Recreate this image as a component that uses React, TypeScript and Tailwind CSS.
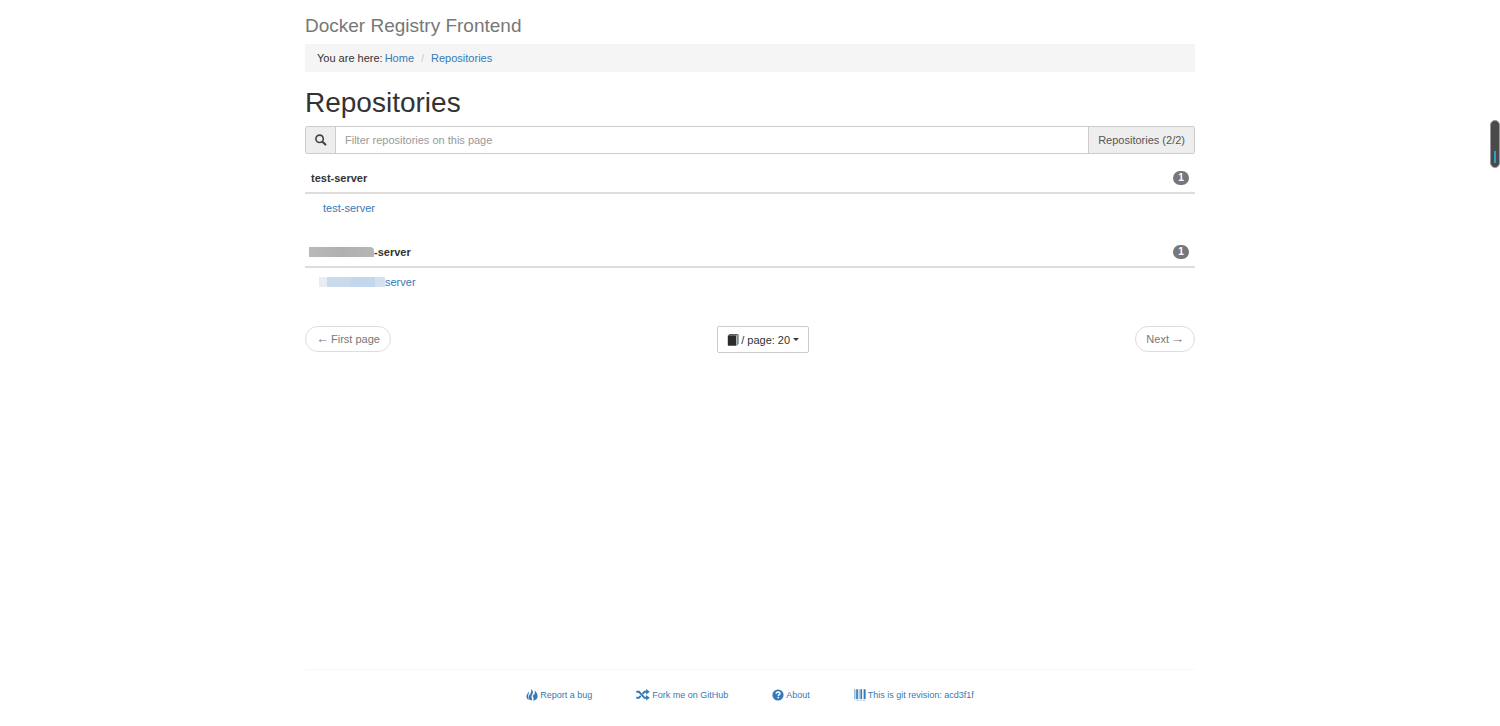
import { useState } from "react";
import type { ReactNode } from "react";

type Repository = {
  name: string;
  link: string;
  tags: number;
  masked?: boolean;
};

const REPOSITORIES: Repository[] = [
  { name: "test-server", link: "test-server", tags: 1 },
  { name: "-server", link: "server", tags: 1, masked: true }
];

const PAGE_SIZES = [10, 20, 50, 100];

function SearchIcon() {
  return (
    <svg viewBox="0 0 12 12" className="size-3" fill="none" stroke="#444" aria-hidden="true">
      <circle cx="4.6" cy="4.8" r="3.7" strokeWidth="1.6" />
      <path d="M7.7 7.9 10.4 10.6" strokeWidth="2.1" strokeLinecap="round" />
    </svg>
  );
}

function BookIcon() {
  return (
    <svg viewBox="0 0 12 12" className="size-3" aria-hidden="true">
      <path d="M2.3.3H11.4V9.8L9.6 11.6V1.6H1.2Z" fill="#8fa3b5" />
      <path d="M1 1.4 2.4.2H11L9.4 1.2Z" fill="#444" />
      <path d="M.8 1.4H9.2V11.8H1.6Q.8 11.8.8 11Z" fill="#2b2b2b" />
      <path d="M11.1.5V9.9L9.6 11.5" fill="none" stroke="#3d4852" strokeWidth=".6" />
    </svg>
  );
}

function FireIcon() {
  return (
    <svg viewBox="0 0 12 12" className="size-3" fill="currentColor" aria-hidden="true">
      <path d="M5 0C7.2 1.6 7.4 3.3 6.5 4.8 5.7 6.4 5.2 7.6 5.7 9.2 6 10.1 6 10.7 5.9 11.6 3.9 11.3 2.7 10 2.6 8.4 2.4 6.7 4 5.6 4.7 3.9 5.3 2.6 5.4 1.4 5 0Z" />
      <path d="M3 2.6C3.3 4.2 2.2 5.4 2.1 7.4 2.1 9 2.5 10 3.5 11 1.4 10.4.4 9.1.4 7.2.4 5.4 2.2 4.4 3 2.6Z" />
      <path d="M8.6 1.5C10.5 3.2 11.7 5.3 11.6 7.4 11.5 9.7 9.8 11.2 7 11.7 7.8 10.3 7.8 9.3 7.2 8.2 6.7 7.2 6.7 6.3 7.3 5.3L7.9 6.4C8.8 5 9.1 3.4 8.6 1.5Z" />
    </svg>
  );
}

function ForkIcon() {
  return (
    <svg viewBox="0 0 14 12" className="h-3 w-3.5" aria-hidden="true">
      <path
        d="M.3 2.8H3L8.5 8.8H10.7M.3 8.8H3L4.7 6.9M6.6 4.8 8.5 2.8H10.7"
        fill="none"
        stroke="currentColor"
        strokeWidth="1.9"
      />
      <path d="M10.1.1 13.8 2.8 10.1 5.5ZM10.1 6.1 13.8 8.8 10.1 11.5Z" fill="currentColor" />
    </svg>
  );
}

function QuestionIcon() {
  return (
    <svg viewBox="0 0 12 12" className="size-3" aria-hidden="true">
      <circle cx="6" cy="6" r="5.6" fill="currentColor" />
      <path
        d="M4.2 4.7C4.2 3.4 5 2.9 6 2.9 7.1 2.9 7.9 3.5 7.9 4.5 7.9 5.7 6.3 5.7 6.3 7"
        fill="none"
        stroke="#fff"
        strokeWidth="1.5"
      />
      <path d="M5.5 7.8H7.1V9.3H5.5Z" fill="#fff" />
    </svg>
  );
}

function BarcodeIcon() {
  return (
    <svg viewBox="0 0 12 12" className="size-3" fill="currentColor" aria-hidden="true">
      <path d="M.5.2H1.3V10H.5ZM2.2.2H3.9V10H2.2ZM4.8.2H5.4V10H4.8ZM6.4.2H8V10H6.4ZM8.9.2H9.4V10H8.9ZM10 .2H11.6V10H10Z" />
      <path d="M.5 10.8H1.3V11.5H.5ZM2.2 10.8H5.4V11.5H2.2ZM6.4 10.8H8V11.5H6.4ZM8.9 10.8H11.6V11.5H8.9Z" opacity=".6" />
    </svg>
  );
}

function FooterLink({ icon, children }: { icon: ReactNode; children: ReactNode }) {
  return (
    <a href="#" className="flex items-center gap-0.5 text-[#337ab7] hover:underline">
      {icon}
      {children}
    </a>
  );
}

function RepositoryTable({ repo }: { repo: Repository }) {
  return (
    <table className="mb-4 w-full">
      <thead>
        <tr className="border-b-2 border-[#ddd]">
          <th className="px-1.5 py-1.5 text-left font-bold">
            <span className="flex items-center">
              {repo.masked && (
                <span className="-ml-0.5 h-2.5 w-[65px] rounded-tr-sm bg-linear-to-r from-[#b9b9b9] via-[#b0b0b0] to-[#b6b6b6]" />
              )}
              {repo.name}
            </span>
          </th>
          <th className="px-1.5">
            <span className="ml-auto block w-4 rounded-full bg-[#777] text-center text-[10px] leading-3.5 font-bold text-white">
              {repo.tags}
            </span>
          </th>
        </tr>
      </thead>
      <tbody>
        <tr>
          <td colSpan={2} className="py-1.5 pr-1.5 pl-[18px]">
            <a href="#" className="flex items-center text-[#337ab7] hover:underline">
              {repo.masked && (
                <span className="-ml-1 flex h-2.5">
                  <span className="w-2 bg-[#e9edf1]" />
                  <span className="w-6 bg-[#c9daeb]" />
                  <span className="w-6 bg-[#c3d7ec]" />
                  <span className="w-2.5 bg-[#d3e1ee]" />
                </span>
              )}
              {repo.link}
            </a>
          </td>
        </tr>
      </tbody>
    </table>
  );
}

export default function App() {
  const [filter, setFilter] = useState("");
  const [pageSize, setPageSize] = useState(20);

  const visible = REPOSITORIES.filter((r) => r.name.includes(filter));

  return (
    <div className="flex min-h-screen flex-col bg-white px-4 font-['Liberation_Sans',Arial,sans-serif] text-[11px] leading-4 text-[#333]">
      <div className="mx-auto flex w-full max-w-[890px] grow flex-col">
        <header className="pt-4">
          <p className="text-[19px] leading-5 text-[#777]">Docker Registry Frontend</p>
        </header>

        <nav aria-label="Breadcrumb" className="mt-2 flex bg-[#f5f5f5] px-3 py-1.5">
          <span className="mr-0.5">You are here:</span>
          <a href="#" className="text-[#337ab7] hover:underline">Home</a>
          <span className="mx-[7px] text-[#ccc]">/</span>
          <a href="#" className="text-[#337ab7] hover:underline">Repositories</a>
        </nav>

        <main>
          <h1 className="mt-4 text-[28px] leading-[30px]">Repositories</h1>

          <div className="mt-2 flex h-7 rounded-xs border border-[#ccc]">
            <label
              htmlFor="filter"
              aria-label="Filter"
              className="flex w-[30px] items-center justify-center border-r border-[#ccc] bg-[#eee]"
            >
              <SearchIcon />
            </label>
            <input
              id="filter"
              type="text"
              value={filter}
              onChange={(e) => setFilter(e.target.value)}
              placeholder="Filter repositories on this page"
              className="min-w-0 grow px-[9px] outline-none placeholder:text-[#999]"
            />
            <span className="flex items-center border-l border-[#ccc] bg-[#eee] px-[9px] text-[#555]">
              Repositories ({visible.length}/{REPOSITORIES.length})
            </span>
          </div>

          <div className="mt-2.5">
            {visible.map((repo) => (
              <RepositoryTable key={repo.name} repo={repo} />
            ))}
          </div>

          <div className="mt-[30px] flex items-start justify-between">
            <button
              type="button"
              className="flex h-[26px] items-center gap-0.5 rounded-full border border-[#ddd] px-2.5 text-[#777]"
            >
              <span className="text-[13px]">←</span>
              First page
            </button>
            <label className="flex h-[27px] items-center rounded-xs border border-[#ccc] px-[9px]">
              <BookIcon />
              <select
                aria-label="Repositories per page"
                value={pageSize}
                onChange={(e) => setPageSize(Number(e.target.value))}
                className="field-sizing-content appearance-none pl-0.5 outline-none"
              >
                {PAGE_SIZES.map((n) => (
                  <option key={n} value={n}>
                    / page: {n}
                  </option>
                ))}
              </select>
              <svg viewBox="0 0 6 3" className="ml-[3px] h-[3px] w-1.5" aria-hidden="true">
                <path d="M0 0H6L3 3Z" fill="#333" />
              </svg>
            </label>
            <button
              type="button"
              className="flex h-[26px] items-center gap-0.5 rounded-full border border-[#ddd] px-2.5 text-[#777]"
            >
              Next
              <span className="text-[13px]">→</span>
            </button>
          </div>
        </main>

        <footer className="mt-auto flex justify-center gap-11 border-t border-[#f7f7f7] pt-[17px] pb-[23px] text-[9px]">
          <FooterLink icon={<FireIcon />}>Report a bug</FooterLink>
          <FooterLink icon={<ForkIcon />}>Fork me on GitHub</FooterLink>
          <FooterLink icon={<QuestionIcon />}>About</FooterLink>
          <FooterLink icon={<BarcodeIcon />}>This is git revision: acd3f1f</FooterLink>
        </footer>
      </div>

      <div className="fixed top-[120px] right-0 flex h-12 w-2.5 items-end justify-center rounded-full border border-[#999] bg-[#4a4a4a] pb-1">
        <span className="h-3 w-0.5 bg-[#2f9fc9]" />
      </div>
    </div>
  );
}
